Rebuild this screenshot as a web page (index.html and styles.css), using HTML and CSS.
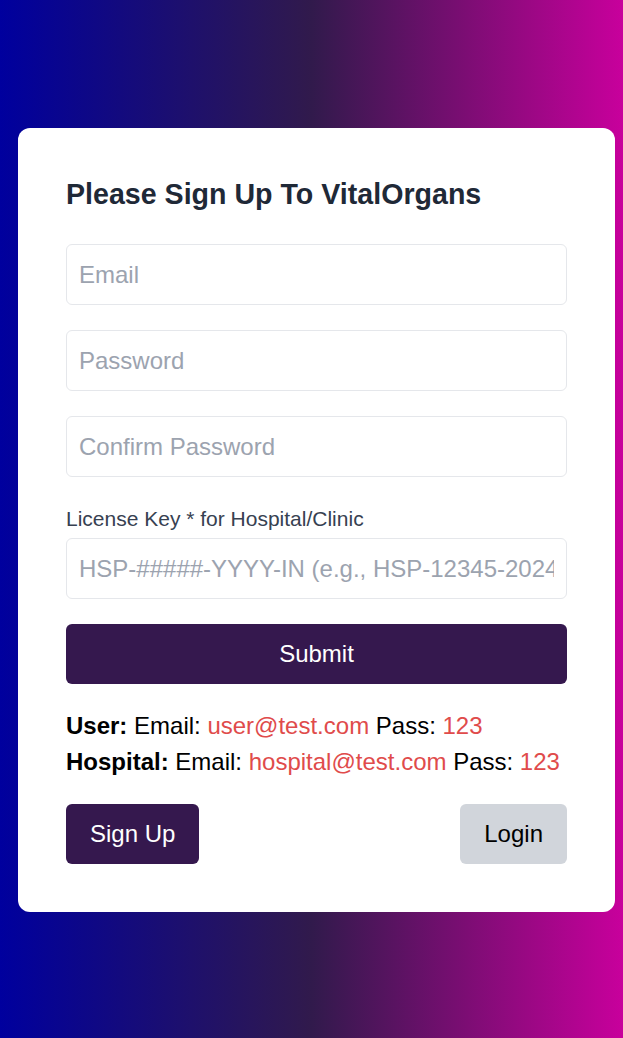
FILE: index.html
```html
<!DOCTYPE html>
<html lang="en">
<head>
<meta charset="utf-8">
<title>Sign Up - VitalOrgans</title>
<link rel="stylesheet" href="styles.css">
</head>
<body>
<main class="page">
  <section class="card">
    <h1 class="title">Please Sign Up To VitalOrgans</h1>
    <form class="form">
      <input class="field" type="email" placeholder="Email">
      <input class="field" type="password" placeholder="Password">
      <input class="field" type="password" placeholder="Confirm Password">
      <label class="label">License Key * for Hospital/Clinic</label>
      <input class="field field-key" type="text" placeholder="HSP-#####-YYYY-IN (e.g., HSP-12345-2024-IN)">
      <button class="submit" type="button">Submit</button>
    </form>
    <div class="creds">
      <p><b>User:</b> Email: <span class="red">user@test.com</span> Pass: <span class="red">123</span></p>
      <p><b>Hospital:</b> Email: <span class="red">hospital@test.com</span> Pass: <span class="red">123</span></p>
    </div>
    <div class="actions">
      <button class="btn btn-dark" type="button">Sign Up</button>
      <button class="btn btn-light" type="button">Login</button>
    </div>
  </section>
</main>
</body>
</html>
```
FILE: styles.css
```css
* { box-sizing: border-box; }
html, body { margin: 0; padding: 0; }
body {
  font-family: "Liberation Sans", Arial, sans-serif;
  background: linear-gradient(to right, #00009e 0%, #311a4c 50%, #c8009c 100%);
  min-height: 100vh;
}
.page {
  min-height: 100vh;
  display: flex;
  align-items: center;
  padding: 2px 8px 0 18px;
}
.card {
  width: 597px;
  background: #fff;
  border-radius: 12px;
  padding: 48px;
}
.title {
  margin: 0 0 32px;
  font-size: 28.6px;
  line-height: 36px;
  font-weight: 700;
  color: #1f2937;
}
.form { display: flex; flex-direction: column; }
.field {
  height: 61px;
  width: 100%;
  border: 1px solid #e5e7eb;
  border-radius: 6px;
  padding: 0 12px;
  font-family: inherit;
  font-size: 24px;
  color: #111827;
  margin-bottom: 25px;
  outline: none;
}
.field::placeholder { color: #9ca3af; }
.label {
  font-size: 21px;
  line-height: 26px;
  color: #374151;
  margin-top: 4px;
  margin-bottom: 6px;
}
.submit {
  height: 60px;
  border: 0;
  border-radius: 6px;
  background: #35184e;
  color: #fff;
  font-family: inherit;
  font-size: 24px;
}
.creds { margin-top: 24px; font-size: 24px; line-height: 36px; color: #000; }
.creds p { margin: 0; }
.red { color: #e04b4b; }
.actions {
  display: flex;
  justify-content: space-between;
  margin-top: 24px;
}
.btn {
  height: 60px;
  border: 0;
  border-radius: 6px;
  padding: 0 24px;
  font-family: inherit;
  font-size: 24px;
}
.btn-dark { background: #35184e; color: #fff; }
.btn-light { background: #d1d5db; color: #000; }
```
